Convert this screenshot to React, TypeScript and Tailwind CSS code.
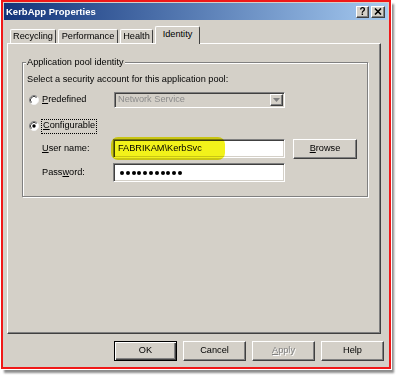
const raised =
  'border border-t-white border-l-white border-r-[#404040] border-b-[#404040] shadow-[inset_-1px_-1px_0_#808080]'
const sunken =
  'border border-t-[#808080] border-l-[#808080] border-r-white border-b-white shadow-[inset_1px_1px_0_#404040,inset_-1px_-1px_0_#d4d0c8]'

function Radio({ checked }: { checked?: boolean }) {
  return (
    <svg width="10" height="10" viewBox="0 0 10 10" className="shrink-0">
      <circle cx="5" cy="5" r="4.5" fill="#fff" />
      <path d="M1.8 8.2 A4.5 4.5 0 0 1 8.2 1.8" stroke="#808080" fill="none" />
      <path d="M8.2 1.8 A4.5 4.5 0 0 1 1.8 8.2" stroke="#f4f4f4" fill="none" />
      <path d="M2.5 7.5 A3.5 3.5 0 0 1 7.5 2.5" stroke="#404040" fill="none" />
      {checked && <circle cx="5" cy="5" r="1.7" fill="#000" />}
    </svg>
  )
}

function Tab({ label, width, active }: { label: string; width: string; active?: boolean }) {
  return (
    <div
      className={`${width} flex items-center justify-center rounded-t-[2px] border-t border-l border-r border-t-white border-l-white border-r-[#404040] bg-[#d4d0c8] ${
        active ? 'relative z-10 mb-[-1px] h-[18px] pb-[2px]' : 'h-[14px]'
      }`}
    >
      {label}
    </div>
  )
}

function Button({ children, isDefault, disabled }: { children: React.ReactNode; isDefault?: boolean; disabled?: boolean }) {
  return (
    <div
      className={`w-[63px] h-[20px] flex items-center justify-center bg-[#d4d0c8] ${
        isDefault
          ? 'border border-black shadow-[inset_1px_1px_0_#fff,inset_-1px_-1px_0_#404040,inset_-2px_-2px_0_#808080]'
          : raised
      } ${disabled ? 'text-[#808080] [text-shadow:1px_1px_0_#fff]' : ''}`}
    >
      {children}
    </div>
  )
}

export default function App() {
  return (
    <div className="w-[396px] h-[376px] bg-white pl-[1px] font-['Liberation_Sans',Arial,sans-serif] text-[9.2px] text-black leading-none">
      <div className="w-[390px] h-[369px] border-2 border-[#f01818] bg-[#d4d0c8] flex flex-col shadow-[0_0_0_1px_#fff,3px_4px_2px_rgba(0,0,0,0.45)]">
        {/* title bar */}
        <div className="mt-[1px] mx-[1px] h-[17px] flex items-center justify-between bg-linear-to-r from-[#14347a] to-[#a6caf0] pl-[2px] pr-[3px]">
          <span className="text-white font-bold text-[9.5px]">KerbApp Properties</span>
          <div className="flex gap-[2px]">
            <div className={`w-[13px] h-[12px] flex items-center justify-center bg-[#d4d0c8] font-bold text-[10px] ${raised}`}>
              ?
            </div>
            <div className={`w-[14px] h-[12px] flex items-center justify-center bg-[#d4d0c8] ${raised}`}>
              <svg width="8" height="7" viewBox="0 0 8 7">
                <path d="M1 0.5 L7 6.5 M7 0.5 L1 6.5" stroke="#000" strokeWidth="1.6" />
              </svg>
            </div>
          </div>
        </div>

        {/* tabs */}
        <div className="mt-[7px] pl-[7px] h-[16px] flex items-end gap-[2px]">
          <Tab label="Recycling" width="w-[46px]" />
          <Tab label="Performance" width="w-[60px]" />
          <Tab label="Health" width="w-[33px]" />
          <Tab label="Identity" width="w-[45px]" active />
        </div>

        {/* tab page */}
        <div className="ml-[4px] w-[374px] h-[291px] border border-t-white border-l-white border-r-[#404040] border-b-[#404040] shadow-[inset_-1px_-1px_0_#808080] pt-[12px] pl-[14px]">
          <fieldset className="w-[346px] border border-[#808080] shadow-[inset_1px_1px_0_#fff,1px_1px_0_#fff] pb-[14px]">
            <legend className="ml-[3px] px-[1px] leading-[12px] bg-[#d4d0c8]">Application pool identity</legend>

            <div className="mt-[6px] h-[12px] pl-[4px] flex items-center">
              Select a security account for this application pool:
            </div>

            <div className="mt-[6px] h-[16px] flex items-center">
              <div className="w-[91px] pl-[6px] flex items-center gap-[3px]">
                <Radio />
                <span>
                  <span className="underline">P</span>redefined
                </span>
              </div>
              <div className={`w-[171px] h-[16px] flex items-center justify-between bg-[#d4d0c8] pl-[3px] pr-[1px] ${sunken}`}>
                <span className="text-[#8c8c8c]">Network Service</span>
                <div className={`w-[13px] h-[12px] flex items-center justify-center bg-[#d4d0c8] ${raised}`}>
                  <svg width="7" height="4" viewBox="0 0 7 4">
                    <path d="M0 0 H7 L3.5 4 Z" fill="#808080" />
                  </svg>
                </div>
              </div>
            </div>

            <div className="mt-[10px] h-[16px] flex items-center pl-[6px] gap-[2px]">
              <Radio checked />
              <span className="border border-dotted border-black h-[15px] px-[1px] flex items-center">
                <span>
                  <span className="underline">C</span>onfigurable
                </span>
              </span>
            </div>

            <div className="mt-[5px] h-[19px] flex items-center">
              <div className="w-[90px] pl-[19px]">
                <span className="underline">U</span>ser name:
              </div>
              <div className={`relative w-[172px] h-[19px] bg-white flex items-center pl-[4px] ${sunken}`}>
                {/* highlighter mark over the screenshot */}
                <span className="absolute left-[-3px] top-[-3px] w-[114px] h-[23px] rounded-[7px] bg-[#f2f21a] blur-[0.5px] mix-blend-multiply" />
                <span className="relative">FABRIKAM\KerbSvc</span>
              </div>
              <div className={`ml-[8px] w-[64px] h-[20px] flex items-center justify-center bg-[#d4d0c8] ${raised}`}>
                <span>
                  <span className="underline">B</span>rowse
                </span>
              </div>
            </div>

            <div className="mt-[5px] h-[19px] flex items-center">
              <div className="w-[90px] pl-[19px]">
                Pass<span className="underline">w</span>ord:
              </div>
              <div className={`w-[172px] h-[19px] bg-white flex items-center pl-[6px] gap-[1.8px] ${sunken}`}>
                {Array.from({ length: 11 }).map((_, i) => (
                  <span key={i} className="w-[4px] h-[4px] rounded-full bg-black" />
                ))}
              </div>
            </div>
          </fieldset>
        </div>

        {/* dialog buttons */}
        <div className="mt-[7px] flex justify-end gap-[6px] pr-[5px]">
          <Button isDefault>OK</Button>
          <Button>Cancel</Button>
          <Button disabled>
            <span>
              <span className="underline">A</span>pply
            </span>
          </Button>
          <Button>Help</Button>
        </div>
      </div>
    </div>
  )
}
